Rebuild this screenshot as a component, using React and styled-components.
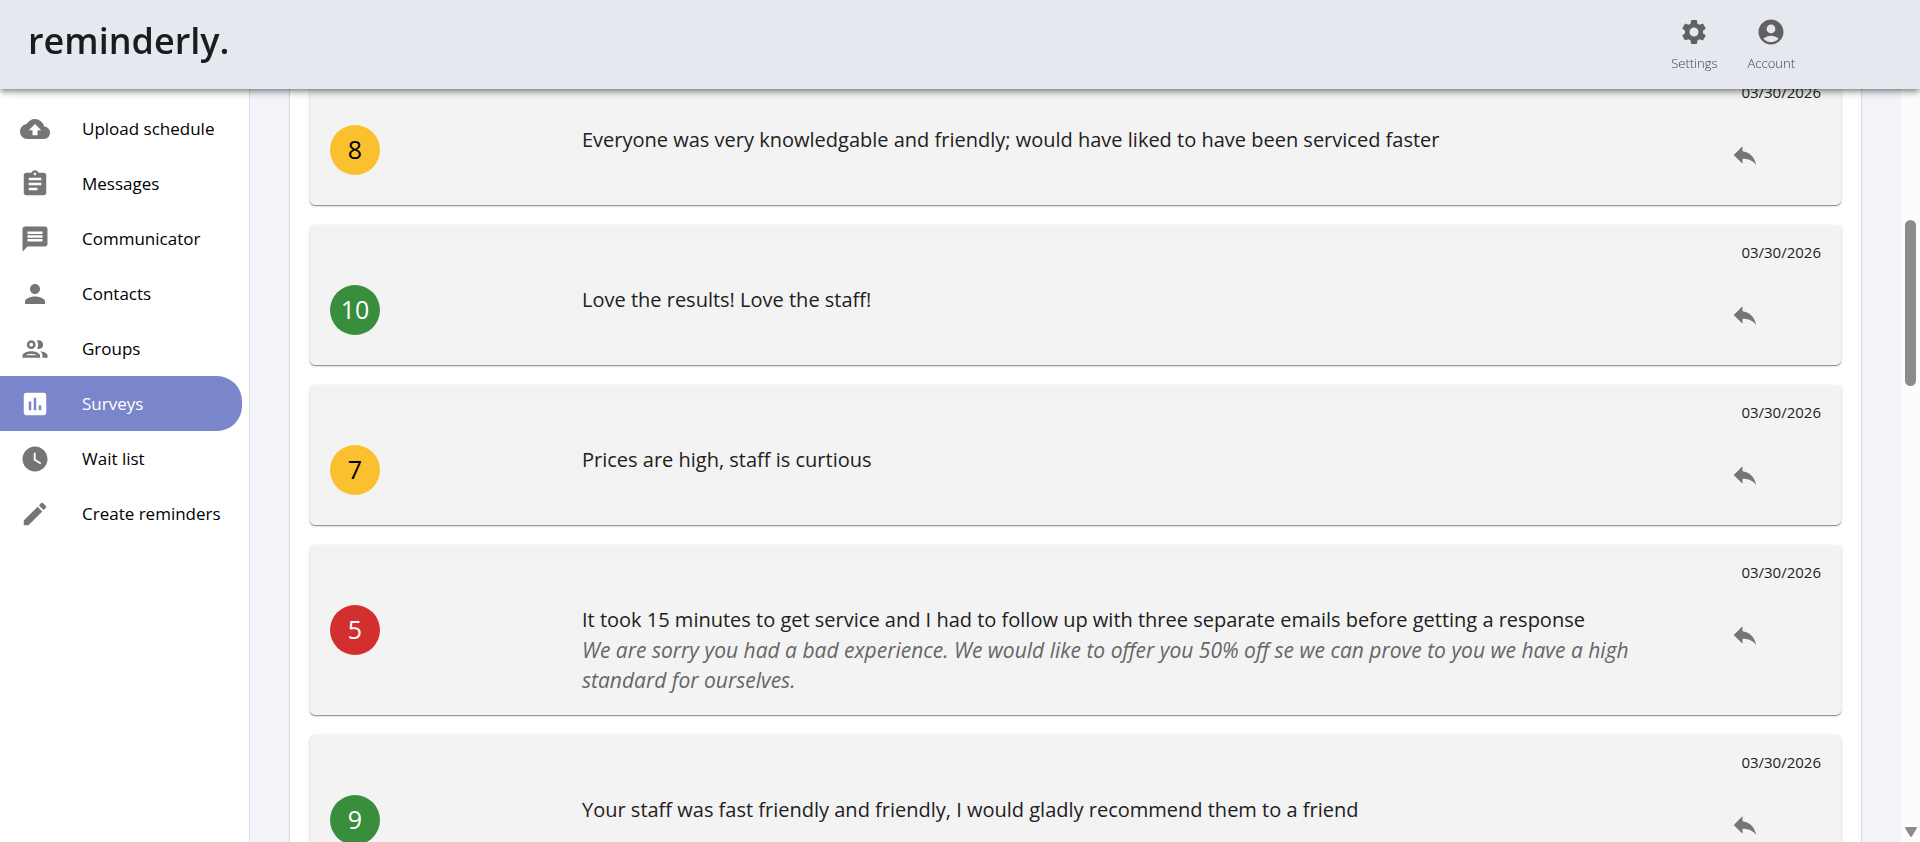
import React, { useState } from "react";
import styled, { createGlobalStyle } from "styled-components";
import {
  MdAccountCircle,
  MdAssignment,
  MdCloudUpload,
  MdCreate,
  MdInsertChart,
  MdMessage,
  MdOutlineGroup,
  MdPerson,
  MdReply,
  MdSettings,
  MdWatchLater,
} from "react-icons/md";

const navItems = [
  { label: "Upload schedule", icon: MdCloudUpload },
  { label: "Messages", icon: MdAssignment },
  { label: "Communicator", icon: MdMessage },
  { label: "Contacts", icon: MdPerson },
  { label: "Groups", icon: MdOutlineGroup },
  { label: "Surveys", icon: MdInsertChart },
  { label: "Wait list", icon: MdWatchLater },
  { label: "Create reminders", icon: MdCreate },
];

const surveys = [
  {
    score: 8,
    date: "03/30/2026",
    comment:
      "Everyone was very knowledgable and friendly; would have liked to have been serviced faster",
  },
  { score: 10, date: "03/30/2026", comment: "Love the results! Love the staff!" },
  { score: 7, date: "03/30/2026", comment: "Prices are high, staff is curtious" },
  {
    score: 5,
    date: "03/30/2026",
    comment:
      "It took 15 minutes to get service and I had to follow up with three separate emails before getting a response",
    reply:
      "We are sorry you had a bad experience. We would like to offer you 50% off se we can prove to you we have a high standard for ourselves.",
  },
  {
    score: 9,
    date: "03/30/2026",
    comment:
      "Your staff was fast friendly and friendly, I would gladly recommend them to a friend",
  },
];

const scoreColor = (score) => {
  if (score >= 9) return "#388e3c";
  if (score >= 7) return "#fbc02d";
  return "#d32f2f";
};

export default function App() {
  const [active, setActive] = useState("Surveys");

  return (
    <>
      <GlobalStyle />
      <Header>
        <Logo href="#">reminderly.</Logo>
        <HeaderActions>
          <HeaderButton type="button">
            <MdSettings />
            Settings
          </HeaderButton>
          <HeaderButton type="button">
            <MdAccountCircle />
            Account
          </HeaderButton>
        </HeaderActions>
      </Header>
      <Page>
        <Sidebar>
          {navItems.map(({ label, icon: Icon }) => (
            <NavLink
              key={label}
              href="#"
              $active={label === active}
              onClick={() => setActive(label)}
            >
              <Icon />
              {label}
            </NavLink>
          ))}
        </Sidebar>
        <Content>
          <Panel>
            {surveys.map((survey) => (
              <SurveyCard key={survey.score} {...survey} />
            ))}
          </Panel>
        </Content>
        <ScrollTrack>
          <ScrollThumb />
          <ScrollArrow viewBox="0 0 12 10">
            <path d="M1 0h10q1.500 0 .7 1.400L7 9.200q-1 1.300-2 0L.3 1.400Q-.5 0 1 0z" />
          </ScrollArrow>
        </ScrollTrack>
      </Page>
    </>
  );
}

function SurveyCard({ score, date, comment, reply }) {
  return (
    <Card>
      <CardDate>{date}</CardDate>
      <CardBody>
        <Score $score={score}>{score}</Score>
        <Comment>
          <p>{comment}</p>
          {reply && <Reply>{reply}</Reply>}
        </Comment>
        <ReplyButton type="button" aria-label="Reply">
          <MdReply />
        </ReplyButton>
      </CardBody>
    </Card>
  );
}

const GlobalStyle = createGlobalStyle`
  * {
    box-sizing: border-box;
  }
  body {
    margin: 0;
    overflow: hidden;
    background: #f3f4fa;
    color: #212121;
    font-family: "Open Sans", "Noto Sans", sans-serif;
  }
  p {
    margin: 0;
  }
  button {
    border: 0;
    background: none;
    font-family: inherit;
    cursor: pointer;
  }
`;

const Header = styled.header`
  position: fixed;
  top: 0;
  left: 0;
  right: 0;
  z-index: 2;
  height: 89px;
  padding: 0 120px 0 28px;
  display: flex;
  align-items: flex-start;
  justify-content: space-between;
  background: #e6e8f0;
  box-shadow: 0 2px 5px -1px rgba(0, 0, 0, 0.4),
    0 5px 6px rgba(0, 0, 0, 0.14), 0 1px 12px rgba(0, 0, 0, 0.12);
`;

const Logo = styled.a`
  padding-top: 16px;
  color: #1b1c1e;
  font-size: 36px;
  font-weight: 600;
  line-height: 50px;
  text-decoration: none;
`;

const HeaderActions = styled.div`
  display: flex;
  padding-top: 17px;
  gap: 20px;
`;

const HeaderButton = styled.button`
  display: flex;
  flex-direction: column;
  align-items: center;
  gap: 6px;
  padding: 0 5px;
  color: #444;
  font-size: 13px;
  font-weight: 300;
  line-height: 20px;
  svg {
    width: 30px;
    height: 30px;
    color: #616161;
  }
`;

const Page = styled.div`
  display: flex;
  height: 100vh;
`;

const Sidebar = styled.nav`
  flex: 0 0 250px;
  padding: 101px 7px 0 0;
  background: #fff;
  border-right: 1px solid #dcdde3;
`;

const NavLink = styled.a`
  display: flex;
  align-items: center;
  gap: 32px;
  height: 55px;
  padding-left: 20px;
  border-radius: 0 25px 25px 0;
  background: ${({ $active }) => ($active ? "#7986cb" : "transparent")};
  color: ${({ $active }) => ($active ? "#fff" : "#000")};
  font-size: 17px;
  text-decoration: none;
  svg {
    width: 30px;
    height: 30px;
    color: ${({ $active }) => ($active ? "#fff" : "#757575")};
  }
`;

const Content = styled.main`
  flex: 1;
  min-width: 0;
  padding: 0 40px;
  overflow: hidden;
`;

const Panel = styled.section`
  display: flex;
  flex-direction: column;
  gap: 20px;
  padding: 65px 20px 20px;
  background: #fff;
  box-shadow: 0 0 2px rgba(0, 0, 0, 0.3);
`;

const Card = styled.article`
  padding: 20px;
  border-radius: 5px;
  background: #f3f3f3;
  box-shadow: 0 1px 1px rgba(0, 0, 0, 0.4), 0 1px 4px rgba(0, 0, 0, 0.12);
`;

const CardDate = styled.div`
  height: 40px;
  font-size: 15px;
  line-height: 14px;
  text-align: right;
`;

const CardBody = styled.div`
  display: grid;
  grid-template-columns: 252px 1fr 101px;
  align-items: start;
  min-height: 60px;
`;

const Score = styled.div`
  width: 50px;
  height: 50px;
  border-radius: 50%;
  background: ${({ $score }) => scoreColor($score)};
  color: ${({ $score }) => ($score === 7 || $score === 8 ? "#000" : "#fff")};
  font-size: 25px;
  line-height: 48px;
  text-align: center;
`;

const Comment = styled.div`
  padding-right: 60px;
  font-size: 20px;
  line-height: 30px;
`;

const Reply = styled.p`
  color: #666;
  font-size: 21px;
  font-style: italic;
`;

const ReplyButton = styled.button`
  display: flex;
  width: 50px;
  height: 60px;
  padding: 15px 10px;
  color: #757575;
  svg {
    width: 30px;
    height: 30px;
  }
`;

const ScrollTrack = styled.div`
  display: flex;
  flex: 0 0 19px;
  flex-direction: column;
  align-items: center;
  justify-content: space-between;
  padding: 220px 0 5px;
  background: #fcfcfc;
`;

const ScrollThumb = styled.div`
  width: 11px;
  height: 166px;
  border-radius: 6px;
  background: #8b8b8b;
`;

const ScrollArrow = styled.svg`
  width: 12px;
  height: 10px;
  fill: #8b8b8b;
`;
